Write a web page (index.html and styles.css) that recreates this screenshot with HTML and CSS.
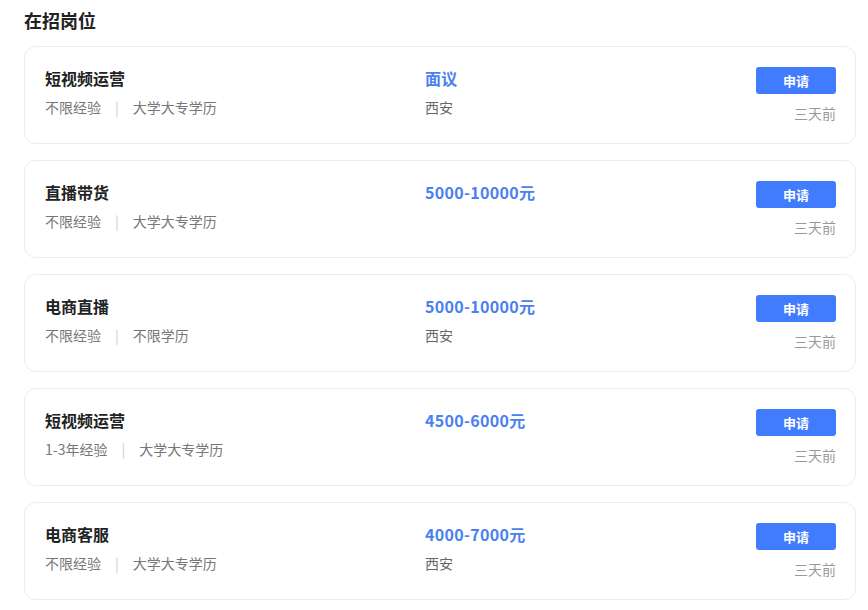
FILE: index.html
```html
<!DOCTYPE html>
<html lang="zh-CN">

<head>
    <meta charset="UTF-8">
    <meta name="viewport" content="width=device-width, initial-scale=1.0">
    <title>在招岗位</title>
    <link rel="stylesheet" href="styles.css">
</head>

<body>

    <div class="jobs">
        <h2 class="jobs-title">在招岗位</h2>
        <ul class="job-list">
            <li class="job">
                <div class="job-main">
                    <div class="job-name">短视频运营</div>
                    <div class="job-meta">不限经验<span class="sep">|</span>大学大专学历</div>
                </div>
                <div class="job-pay">
                    <div class="salary">面议</div>
                    <div class="city">西安</div>
                </div>
                <div class="job-side">
                    <a class="apply" href="#">申请</a>
                    <div class="time">三天前</div>
                </div>
            </li>
            <li class="job">
                <div class="job-main">
                    <div class="job-name">直播带货</div>
                    <div class="job-meta">不限经验<span class="sep">|</span>大学大专学历</div>
                </div>
                <div class="job-pay">
                    <div class="salary">5000-10000元</div>
                    <div class="city"></div>
                </div>
                <div class="job-side">
                    <a class="apply" href="#">申请</a>
                    <div class="time">三天前</div>
                </div>
            </li>
            <li class="job">
                <div class="job-main">
                    <div class="job-name">电商直播</div>
                    <div class="job-meta">不限经验<span class="sep">|</span>不限学历</div>
                </div>
                <div class="job-pay">
                    <div class="salary">5000-10000元</div>
                    <div class="city">西安</div>
                </div>
                <div class="job-side">
                    <a class="apply" href="#">申请</a>
                    <div class="time">三天前</div>
                </div>
            </li>
            <li class="job">
                <div class="job-main">
                    <div class="job-name">短视频运营</div>
                    <div class="job-meta">1-3年经验<span class="sep">|</span>大学大专学历</div>
                </div>
                <div class="job-pay">
                    <div class="salary">4500-6000元</div>
                    <div class="city"></div>
                </div>
                <div class="job-side">
                    <a class="apply" href="#">申请</a>
                    <div class="time">三天前</div>
                </div>
            </li>
            <li class="job">
                <div class="job-main">
                    <div class="job-name">电商客服</div>
                    <div class="job-meta">不限经验<span class="sep">|</span>大学大专学历</div>
                </div>
                <div class="job-pay">
                    <div class="salary">4000-7000元</div>
                    <div class="city">西安</div>
                </div>
                <div class="job-side">
                    <a class="apply" href="#">申请</a>
                    <div class="time">三天前</div>
                </div>
            </li>
        </ul>
    </div>

</body>

</html>
```

FILE: styles.css
```css
* {
    padding: 0px;
    margin: 0px;
    list-style: none;
    text-decoration: none;
    box-sizing: border-box;
}

body {
    background-color: #fff;
    font-family: "Noto Sans CJK SC", "Noto Sans", sans-serif;
    color: #333;
}

.jobs {
    width: 832px;
    margin-left: 24px;
    padding-top: 8px;
}

.jobs-title {
    font-size: 18px;
    line-height: 24px;
    font-weight: bold;
    color: #222;
    margin-bottom: 14px;
}

.job-list {
    display: flex;
    flex-direction: column;
    gap: 16px;
}

/* 单个岗位卡片 */
.job {
    display: grid;
    grid-template-columns: 380px 1fr auto;
    height: 98px;
    padding: 20px 19px 0 20px;
    border: 1px solid #ebebeb;
    border-radius: 12px;
}

.job-name {
    font-size: 16px;
    line-height: 22px;
    font-weight: bold;
    color: #222;
}

.job-meta {
    margin-top: 8px;
    font-size: 14px;
    line-height: 20px;
    color: #777;
}

.sep {
    margin: 0 14px;
    color: #ccc;
}

.salary {
    font-size: 16px;
    line-height: 22px;
    font-weight: bold;
    letter-spacing: 0.3px;
    color: #4a80f0;
}

.city {
    margin-top: 8px;
    font-size: 14px;
    line-height: 20px;
    color: #666;
}

.job-side {
    display: flex;
    flex-direction: column;
    align-items: flex-end;
}

.apply {
    display: block;
    width: 80px;
    height: 27px;
    line-height: 27px;
    text-align: center;
    font-size: 13px;
    font-weight: bold;
    color: #fff;
    background-color: #417cff;
    border-radius: 3px;
}

.time {
    margin-top: 9px;
    font-size: 14px;
    line-height: 20px;
    color: #999;
}
```
